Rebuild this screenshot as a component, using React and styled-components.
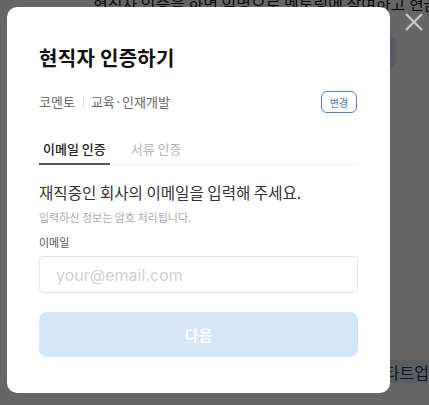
import React from "react";
import styled, { createGlobalStyle } from "styled-components";

const GlobalStyle = createGlobalStyle`
  html, body {
    margin: 0;
    padding: 0;
    width: 429px;
    height: 405px;
    overflow: hidden;
    font-family: "Noto Sans CJK KR", "Noto Sans", sans-serif;
  }
`;

const Page = styled.div`
  position: relative;
  width: 429px;
  height: 405px;
  background: #ffffff;
  overflow: hidden;
`;

const PageContent = styled.div`
  display: flex;
  flex-direction: column;
  align-items: flex-end;
  padding-left: 93px;
`;

const Lead = styled.p`
  margin: -9px 0 0;
  font-size: 16px;
  line-height: 24px;
  color: #111;
  white-space: nowrap;
  align-self: flex-start;
`;

const BackButton = styled.div`
  margin-top: 21px;
  margin-right: 33px;
  width: 120px;
  height: 32px;
  border-radius: 6px;
  background: #dbe6f5;
`;

const Banner = styled.div`
  margin-top: 292px;
  margin-right: -6px;
  padding: 0 6px;
  height: 23px;
  display: flex;
  align-items: center;
  flex-shrink: 0;
  background: #e4ebf6;
  color: #1d2f55;
  font-size: 16px;
  white-space: nowrap;
`;

const Overlay = styled.div`
  position: absolute;
  inset: 0;
  background: rgba(0, 0, 0, 0.6);
  display: flex;
  align-items: flex-start;
  padding: 7px;
`;

const Close = styled.button`
  position: absolute;
  top: 12px;
  right: 5px;
  width: 20px;
  height: 20px;
  padding: 0;
  border: 0;
  background: transparent;
  display: flex;
  cursor: pointer;
`;

const Modal = styled.div`
  width: 383px;
  height: 386px;
  box-sizing: border-box;
  background: #fff;
  border-radius: 10px;
  padding: 36px 32px 0 32px;
  display: flex;
  flex-direction: column;
`;

const Title = styled.h2`
  margin: 0;
  font-size: 20px;
  font-weight: 700;
  line-height: 30px;
  color: #111;
  letter-spacing: 0.3px;
`;

const CompanyRow = styled.div`
  margin-top: 18px;
  display: flex;
  align-items: center;
  justify-content: space-between;
`;

const Company = styled.div`
  display: flex;
  align-items: center;
  font-size: 13px;
  color: #666;
  line-height: 20px;
`;

const Sep = styled.span`
  width: 1px;
  height: 12px;
  background: #ddd;
  margin: 0 7px 0 8px;
`;

const ChangeButton = styled.button`
  width: 36px;
  height: 22px;
  box-sizing: border-box;
  border: 1px solid #4f80c9;
  border-radius: 6px;
  background: #fff;
  color: #4f80c9;
  font-family: inherit;
  font-size: 10px;
  padding: 0;
  margin-right: 1px;
`;

const Tabs = styled.div`
  margin-top: 26px;
  display: flex;
  gap: 17px;
  border-bottom: 1px solid #eeeeee;
`;

const Tab = styled.div`
  padding: 0 4px 4px;
  font-size: 13px;
  line-height: 20px;
  font-weight: ${(p) => (p.active ? 500 : 400)};
  color: ${(p) => (p.active ? "#222" : "#b5b5b5")};
  border-bottom: 2px solid ${(p) => (p.active ? "#555" : "transparent")};
  margin-bottom: -1px;
`;

const Heading = styled.p`
  margin: 15px 0 0;
  font-size: 15.6px;
  line-height: 24px;
  color: #333;
`;

const Note = styled.p`
  margin: 5px 0 0;
  font-size: 11px;
  line-height: 17px;
  color: #aaa;
`;

const Label = styled.label`
  margin-top: 8px;
  font-size: 11px;
  line-height: 17px;
  color: #555;
`;

const Input = styled.input`
  margin-top: 5px;
  height: 37px;
  box-sizing: border-box;
  border: 1px solid #e2e2e2;
  border-radius: 4px;
  padding: 0 16px;
  font-family: Inter, "Noto Sans", sans-serif;
  font-size: 16px;
  outline: none;
  &::placeholder {
    color: #cfcfcf;
  }
`;

const Submit = styled.button`
  margin-top: 19px;
  height: 45px;
  border: 0;
  border-radius: 8px;
  background: #d5e5f7;
  color: #fff;
  font-family: inherit;
  font-size: 15px;
  font-weight: 700;
`;

const App = () => {
  return (
    <Page>
      <GlobalStyle />
      <PageContent>
        <Lead>현직자 인증을 하면 익명으로 멘토링에 참여하고 현금을 받을 수 있어요</Lead>
        <BackButton />
        <Banner>스타트업</Banner>
      </PageContent>
      <Overlay>
        <Modal>
          <Title>현직자 인증하기</Title>
          <CompanyRow>
            <Company>
              코멘토
              <Sep />
              교육·인재개발
            </Company>
            <ChangeButton>변경</ChangeButton>
          </CompanyRow>
          <Tabs>
            <Tab active>이메일 인증</Tab>
            <Tab>서류 인증</Tab>
          </Tabs>
          <Heading>재직중인 회사의 이메일을 입력해 주세요.</Heading>
          <Note>입력하신 정보는 암호 처리됩니다.</Note>
          <Label>이메일</Label>
          <Input placeholder="your@email.com" />
          <Submit>다음</Submit>
        </Modal>
        <Close aria-label="닫기">
          <svg width="20" height="20" viewBox="0 0 20 20">
            <path d="M2 2 L18 18 M18 2 L2 18" stroke="#cfcfcf" strokeWidth="2" />
          </svg>
        </Close>
      </Overlay>
    </Page>
  );
};

export default App;
